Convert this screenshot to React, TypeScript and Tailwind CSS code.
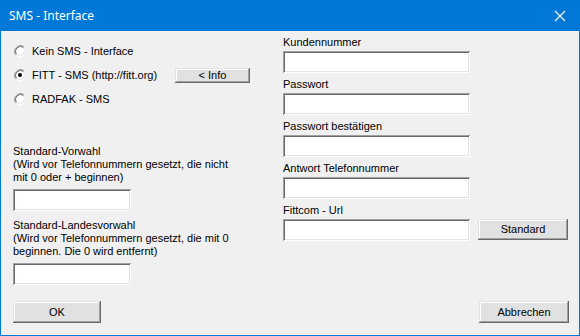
import React from "react";

const font = { fontFamily: '"Liberation Sans", Arial, sans-serif' };

// classic raised / sunken 3d edges
const raised =
  "bg-[#e1e1e1] shadow-[inset_-1px_-1px_#696969,inset_1px_1px_#e3e3e3,inset_-2px_-2px_#a0a0a0,inset_2px_2px_#ffffff]";
const sunken =
  "bg-white shadow-[inset_1px_1px_#a0a0a0,inset_-1px_-1px_#ffffff,inset_2px_2px_#696969,inset_-2px_-2px_#e3e3e3]";

function Radio({ checked }: { checked?: boolean }) {
  return (
    <svg width="12" height="12" viewBox="0 0 12 12" className="shrink-0">
      <path d="M10.2 1.8 A6 6 0 0 0 1.8 10.2" fill="none" stroke="#a0a0a0" strokeWidth="1" />
      <path d="M1.8 10.2 A6 6 0 0 0 10.2 1.8" fill="none" stroke="#ffffff" strokeWidth="1" />
      <circle cx="6" cy="6" r="4.5" fill="#ffffff" />
      <path d="M9.5 2.5 A5 5 0 0 0 2.5 9.5" fill="none" stroke="#696969" strokeWidth="1" />
      <path d="M2.5 9.5 A5 5 0 0 0 9.5 2.5" fill="none" stroke="#e3e3e3" strokeWidth="1" />
      {checked && <circle cx="6" cy="6" r="2" fill="#000" />}
    </svg>
  );
}

function Button({ label, className }: { label: string; className: string }) {
  return (
    <button
      className={`${raised} ${className} shrink-0 flex items-center justify-center text-[11px] text-black leading-none`}
    >
      {label}
    </button>
  );
}

function Field({ label }: { label: string }) {
  return (
    <div className="flex flex-col shrink-0">
      <span className="h-[13px] leading-[13px]">{label}</span>
      <div className={`${sunken} mt-[2px] h-[22px] w-[187px]`} />
    </div>
  );
}

export default function App() {
  const radios = [
    { text: "Kein SMS - Interface" },
    { text: "FITT - SMS (http://fitt.org)", checked: true, info: true },
    { text: "RADFAK - SMS" },
  ];

  return (
    <div className="w-[580px] h-[336px] flex flex-col bg-[#0078d7] text-black text-[11px]" style={font}>
      {/* title bar */}
      <div className="h-[31px] flex items-center justify-between pl-[9px] pr-[10px] shrink-0">
        <span className="text-white text-[12px]" style={{ fontFamily: '"Noto Sans", sans-serif' }}>
          SMS - Interface
        </span>
        <svg width="12" height="12" viewBox="0 0 12 12" className="mr-[4px]">
          <path d="M1 1 L11 11 M11 1 L1 11" stroke="#fff" strokeWidth="1.1" />
        </svg>
      </div>

      {/* body */}
      <div className="flex-1 mx-[1px] mb-[1px] bg-[#f0f0f0] flex flex-col">
        <div className="flex items-start">
          {/* left column */}
          <div className="w-[282px] shrink-0 pl-[12px] pt-[8px] flex flex-col">
            {radios.map((r) => (
              <div key={r.text} className="h-[24px] flex items-center">
                <div className="ml-[1px]">
                  <Radio checked={r.checked} />
                </div>
                <span className="ml-[6px] w-[143px] shrink-0">{r.text}</span>
                {r.info && <Button label="< Info" className="w-[75px] h-[15px]" />}
              </div>
            ))}

            <div className="mt-[34px] leading-[13px]">
              Standard-Vorwahl
              <br />
              (Wird vor Telefonnummern gesetzt, die nicht
              <br />
              mit 0 oder + beginnen)
            </div>
            <div className={`${sunken} mt-[5px] h-[22px] w-[118px]`} />

            <div className="mt-[8px] leading-[13px]">
              Standard-Landesvorwahl
              <br />
              (Wird vor Telefonnummern gesetzt, die mit 0
              <br />
              beginnen. Die 0 wird entfernt)
            </div>
            <div className={`${sunken} mt-[5px] h-[22px] w-[118px]`} />
          </div>

          {/* right column */}
          <div className="w-[296px] shrink-0 pt-[5px] flex flex-col gap-[5px]">
            <Field label="Kundennummer" />
            <Field label="Passwort" />
            <Field label="Passwort bestätigen" />
            <Field label="Antwort Telefonnummer" />
            <div className="flex items-end">
              <Field label="Fittcom - Url" />
              <Button label="Standard" className="ml-[8px] w-[90px] min-w-[90px] h-[21px] mb-[1px]" />
            </div>
          </div>
        </div>

        {/* footer */}
        <div className="mt-auto flex justify-between pl-[12px] pr-[10px] pb-[12px]">
          <Button label="OK" className="w-[88px] h-[22px]" />
          <Button label="Abbrechen" className="w-[90px] h-[22px]" />
        </div>
      </div>
    </div>
  );
}
